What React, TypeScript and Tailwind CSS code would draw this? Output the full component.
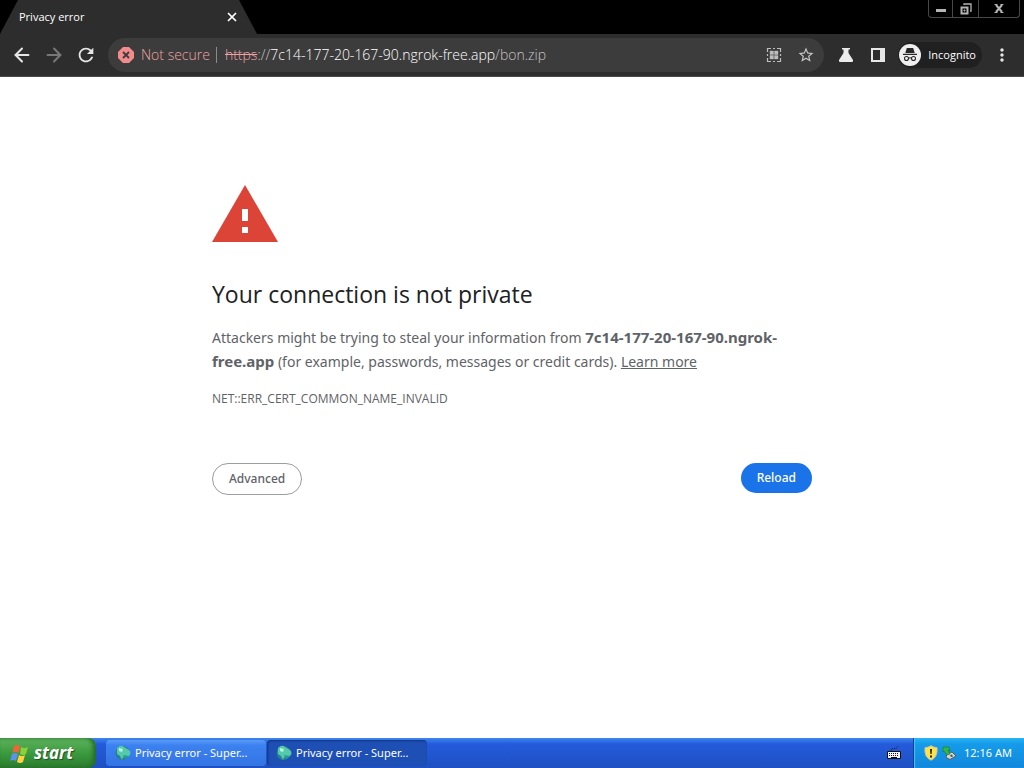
import { ArrowLeft, ArrowRight, X } from 'lucide-react';
import { MdMoreVert, MdRefresh, MdStarOutline } from 'react-icons/md';

const iconButton = 'flex size-8 shrink-0 items-center justify-center text-[#e6e6e6]';

function WindowControls() {
  return (
    <div className="mr-1 flex h-[18px] rounded-b border border-t-0 border-[#484848] text-[#b4b4b4]">
      <button aria-label="Minimize" className="flex w-6 items-center justify-center border-r border-[#484848]">
        <svg viewBox="0 0 12 12" className="size-3" fill="currentColor">
          <path d="M1 6h10v3H1z" />
        </svg>
      </button>
      <button aria-label="Restore" className="flex w-[26px] items-center justify-center border-r border-[#484848]">
        <svg viewBox="0 0 12 12" className="size-3" fill="none" stroke="currentColor">
          <path d="M4 2V1h7v7h-1" strokeWidth="1.3" />
          <path d="M1.500 4.500h6v6h-6z" strokeWidth="2" />
          <path d="M4 7h1v1H4z" />
        </svg>
      </button>
      <button aria-label="Close" className="flex w-10 items-center justify-center">
        <svg viewBox="0 0 12 12" className="size-3" fill="none" stroke="currentColor">
          <path d="M3 2l6 7M9 2l-6 7" strokeWidth="2" />
          <path d="M1.500 1.500h3M7.500 1.500h3M1.500 9.500h3M7.500 9.500h3" strokeWidth="1" />
        </svg>
      </button>
    </div>
  );
}

function TabStrip() {
  return (
    <div className="flex h-[34px] items-start justify-between bg-black">
      <div className="flex h-full w-[257px] items-center justify-between bg-[#2d2d2d] pr-[18px] pl-[19px] [clip-path:polygon(0_100%,18px_0,239px_0,100%_100%)]">
        <span className="text-[11px] text-white">Privacy error</span>
        <button aria-label="Close tab" className="text-white">
          <X className="size-3.5" strokeWidth={3} />
        </button>
      </div>
      <WindowControls />
    </div>
  );
}

function QrIcon() {
  return (
    <svg viewBox="0 0 16 16" className="size-4" fill="none" stroke="#bdbdbd">
      <path
        d="M1.500 5V1.500H5M11 1.500h3.500V5M14.500 11v3.500H11M5 14.500H1.500V11M7 1.500h2M7 14.500h2M1.500 7v2M14.500 7v2"
        strokeWidth="1.2"
      />
      <path d="M4 4h3.500v3.500H4zM8.500 4H12v3.500H8.500zM4 8.500h3.500V12H4zM8.500 8.500H12V12H8.500z" strokeWidth=".4" fill="#bdbdbd" />
    </svg>
  );
}

function IncognitoIcon() {
  return (
    <svg viewBox="0 0 22 22" className="size-[22px] shrink-0">
      <circle cx="11" cy="11" r="11" fill="#efefef" />
      <path d="M7.800 4h6.400l1.500 5H6.300zM4 9.800h14V11H4z" fill="#282828" />
      <g fill="none" stroke="#282828" strokeWidth="1.1">
        <circle cx="7.500" cy="14.500" r="2" />
        <circle cx="14.500" cy="14.500" r="2" />
        <path d="M9.500 14.200q1.500-.8 3 0" />
      </g>
    </svg>
  );
}

function Toolbar() {
  return (
    <div className="flex h-[43px] items-center border-b border-[#4a4a4a] bg-[#2d2d2d] px-1.5">
      <button aria-label="Back" className={iconButton}>
        <ArrowLeft className="size-[22px]" strokeWidth={2.2} />
      </button>
      <button aria-label="Forward" className="flex size-8 shrink-0 items-center justify-center text-[#777777]">
        <ArrowRight className="size-[22px]" strokeWidth={2.2} />
      </button>
      <button aria-label="Reload page" className={iconButton}>
        <MdRefresh className="size-[22px]" />
      </button>
      <div className="ml-1.5 flex h-[34px] min-w-0 flex-1 items-center rounded-full bg-[#3c3c3c] pr-0.5 pl-2.5 text-sm font-light text-[#c4c4c4]">
        <svg viewBox="0 0 16 16" className="size-4 shrink-0">
          <path d="M5 0h6l5 5v6l-5 5H5l-5-5V5z" fill="#f28b8b" />
          <path d="M5 5l6 6M11 5l-6 6" stroke="#3c3c3c" strokeWidth="1.800" />
        </svg>
        <span className="ml-[7px] text-[#eda3a3]">Not secure</span>
        <span className="mr-2 ml-1.5 h-4 w-px bg-[#8a8a8a]" />
        <span className="min-w-0 flex-1 truncate">
          <span className="text-[#eda3a3] line-through">https</span>
          ://<span className="text-white">7c14-177-20-167-90.ngrok-free.app</span>/bon.zip
        </span>
        <button aria-label="QR code" className="flex size-8 items-center justify-center">
          <QrIcon />
        </button>
        <button aria-label="Bookmark this tab" className="flex size-8 items-center justify-center">
          <MdStarOutline className="size-[18px]" />
        </button>
      </div>
      <button aria-label="Experiments" className="ml-1.5 flex size-8 shrink-0 items-center justify-center">
        <svg viewBox="0 0 16 16" className="size-4" fill="#ebebeb">
          <path d="M4 1h8v1.500h-1.500V6l4.500 7q.5 2-1 2H2q-1.500 0-1-2l4.500-7V2.500H4z" />
        </svg>
      </button>
      <button aria-label="Side panel" className={iconButton}>
        <svg viewBox="0 0 14 14" className="size-3.5" fill="currentColor">
          <path d="M0 0h14v14H0zM2 2v10h7V2z" fillRule="evenodd" />
        </svg>
      </button>
      <button className="ml-1 flex h-[26px] items-center gap-[7px] rounded-full bg-[#202020] pr-1.5 pl-px text-[11px] text-white">
        <IncognitoIcon />
        Incognito
      </button>
      <button aria-label="Menu" className="ml-1 flex size-8 shrink-0 items-center justify-center text-[#e6e6e6]">
        <MdMoreVert className="size-5" />
      </button>
    </div>
  );
}

function Interstitial() {
  return (
    <main className="flex-1 bg-white px-6 pt-[108px] text-[#5f6368]">
      <div className="mx-auto max-w-[600px]">
        <svg viewBox="0 0 66 57" className="h-[57px] w-[66px]">
          <path d="M33 0l33 57H0z" fill="#db4437" />
          <path d="M30 24h6v12h-6zM30 42h6v6h-6z" fill="#fff" />
        </svg>
        <h1 className="mt-9 text-[23px] leading-8 text-[#202124]">Your connection is not private</h1>
        <p className="mt-4 font-['Noto_Sans',sans-serif] text-sm leading-6">
          Attackers might be trying to steal your information from{' '}
          <strong className="text-[15px] leading-none font-bold">7c14-177-20-167-90.ngrok-free.app</strong> (for
          example, passwords, messages or credit cards).{' '}
          <a href="#learn-more" className="underline">
            Learn more
          </a>
        </p>
        <div className="mt-[17px] text-xs">NET::ERR_CERT_COMMON_NAME_INVALID</div>
        <div className="mt-14 flex items-start justify-between font-['Noto_Sans',sans-serif] text-xs font-medium">
          <button className="h-8 rounded-full border border-[#9a9da1] px-4">Advanced</button>
          <button className="h-[30px] rounded-full bg-[#1a73e8] px-4 text-white">Reload</button>
        </div>
      </div>
    </main>
  );
}

function GlobeIcon() {
  return (
    <svg viewBox="0 0 16 16" className="size-4 shrink-0">
      <circle cx="7.500" cy="8" r="7" fill="#287f91" />
      <path d="M2 3q4-4 7-1l5 3q3 3 0 6-3 3-6 1l-1 3-2-4-3-2z" fill="#55c9ab" />
      <path d="M4 3l4 1-1 3-3-1z" fill="#b9f5da" />
      <path d="M8 10l6 1-4 3z" fill="#239b91" />
    </svg>
  );
}

function StartButton() {
  return (
    <button className="flex h-full w-24 items-center gap-1 rounded-r-lg bg-linear-to-b from-[#5fb45f] via-[#3b9a3e] to-[#2b7c2e] pl-2.5 text-[17px] font-bold text-white italic shadow-[inset_-3px_0_4px_#236b2a] [text-shadow:1px_1px_1px_#234d20]">
      <svg viewBox="0 0 20 19" className="h-[19px] w-5">
        <path d="M4 2q3-2 6 0L8.500 9q-3-2-6 0z" fill="#ee6636" />
        <path d="M11 3q3 2 7 0l-2 7q-3 2-6 0z" fill="#8bcf3b" />
        <path d="M2 10q3-2 6 0l-2 7q-3-2-6 0z" fill="#5a93ed" />
        <path d="M9 11q3 2 6 0l-2 7q-3 2-6 0z" fill="#ffd33e" />
      </svg>
      start
    </button>
  );
}

function Taskbar() {
  return (
    <footer className="flex h-[30px] items-stretch bg-linear-to-b from-[#3f86ee] via-[#245bdb] via-20% to-[#1f50c2] font-['Noto_Sans',sans-serif] text-[11px] text-white">
      <StartButton />
      <nav className="ml-2.5 flex flex-1 items-center gap-px">
        <button className="flex h-[26px] w-40 items-center gap-1 rounded-sm bg-linear-to-b from-[#5a9bf8] via-[#3c81f0] via-20% to-[#3474e4] pl-[9px]">
          <GlobeIcon />
          Privacy error - Super...
        </button>
        <button className="flex h-[26px] w-40 items-center gap-1 rounded-sm bg-[#1e4fb5] pl-[9px] shadow-[inset_1px_1px_2px_#12357f]">
          <GlobeIcon />
          Privacy error - Super...
        </button>
      </nav>
      <button aria-label="Keyboard" className="mr-3 flex items-center">
        <svg viewBox="0 0 14 14" className="size-3.5">
          <path d="M4 4.500q0-2 3-2t4-2" fill="none" stroke="#111" strokeDasharray="1 1" />
          <path d="M.5 5.500h13v7H.5z" fill="#f3f3f3" stroke="#111" />
          <path d="M2 7.500h10M2 9.500h10" stroke="#111" strokeDasharray="1 1" />
          <path d="M4 11.500h6" stroke="#111" />
        </svg>
      </button>
      <div className="flex items-center border-l border-[#0c3f96] bg-linear-to-b from-[#28b4f4] via-[#159bea] via-20% to-[#1287dc] pr-3 pl-2.5 shadow-[inset_1px_0_1px_#49c5f8]">
        <svg viewBox="0 0 14 16" className="h-4 w-3.5">
          <path d="M7 .7q3 2 6 2Q14 12 7 15.300 0 12 1 2.700q3 0 6-2z" fill="#ffe14a" stroke="#c9c9a5" />
          <path d="M6 4h2l-.4 5H6.400zM6 10.500h2v2H6z" fill="#222" />
        </svg>
        <svg viewBox="0 0 14 14" className="ml-1 size-3.5">
          <path d="M5 8l5-2 4 4-6 3.500-4-2z" fill="#d2d6d4" stroke="#545f5c" />
          <path d="M8 9l2-.5 1 2-2 .5z" fill="#4b5553" />
          <path d="M1 1l6 0 1 4-2-1 2 4-3 1-3-4-1 1z" fill="#34b44a" stroke="#16792d" strokeWidth=".6" />
        </svg>
        <time className="ml-2">12:16 AM</time>
      </div>
    </footer>
  );
}

export default function App() {
  return (
    <div className="flex min-h-screen flex-col font-['Open_Sans',sans-serif]">
      <header>
        <TabStrip />
        <Toolbar />
      </header>
      <Interstitial />
      <Taskbar />
    </div>
  );
}
